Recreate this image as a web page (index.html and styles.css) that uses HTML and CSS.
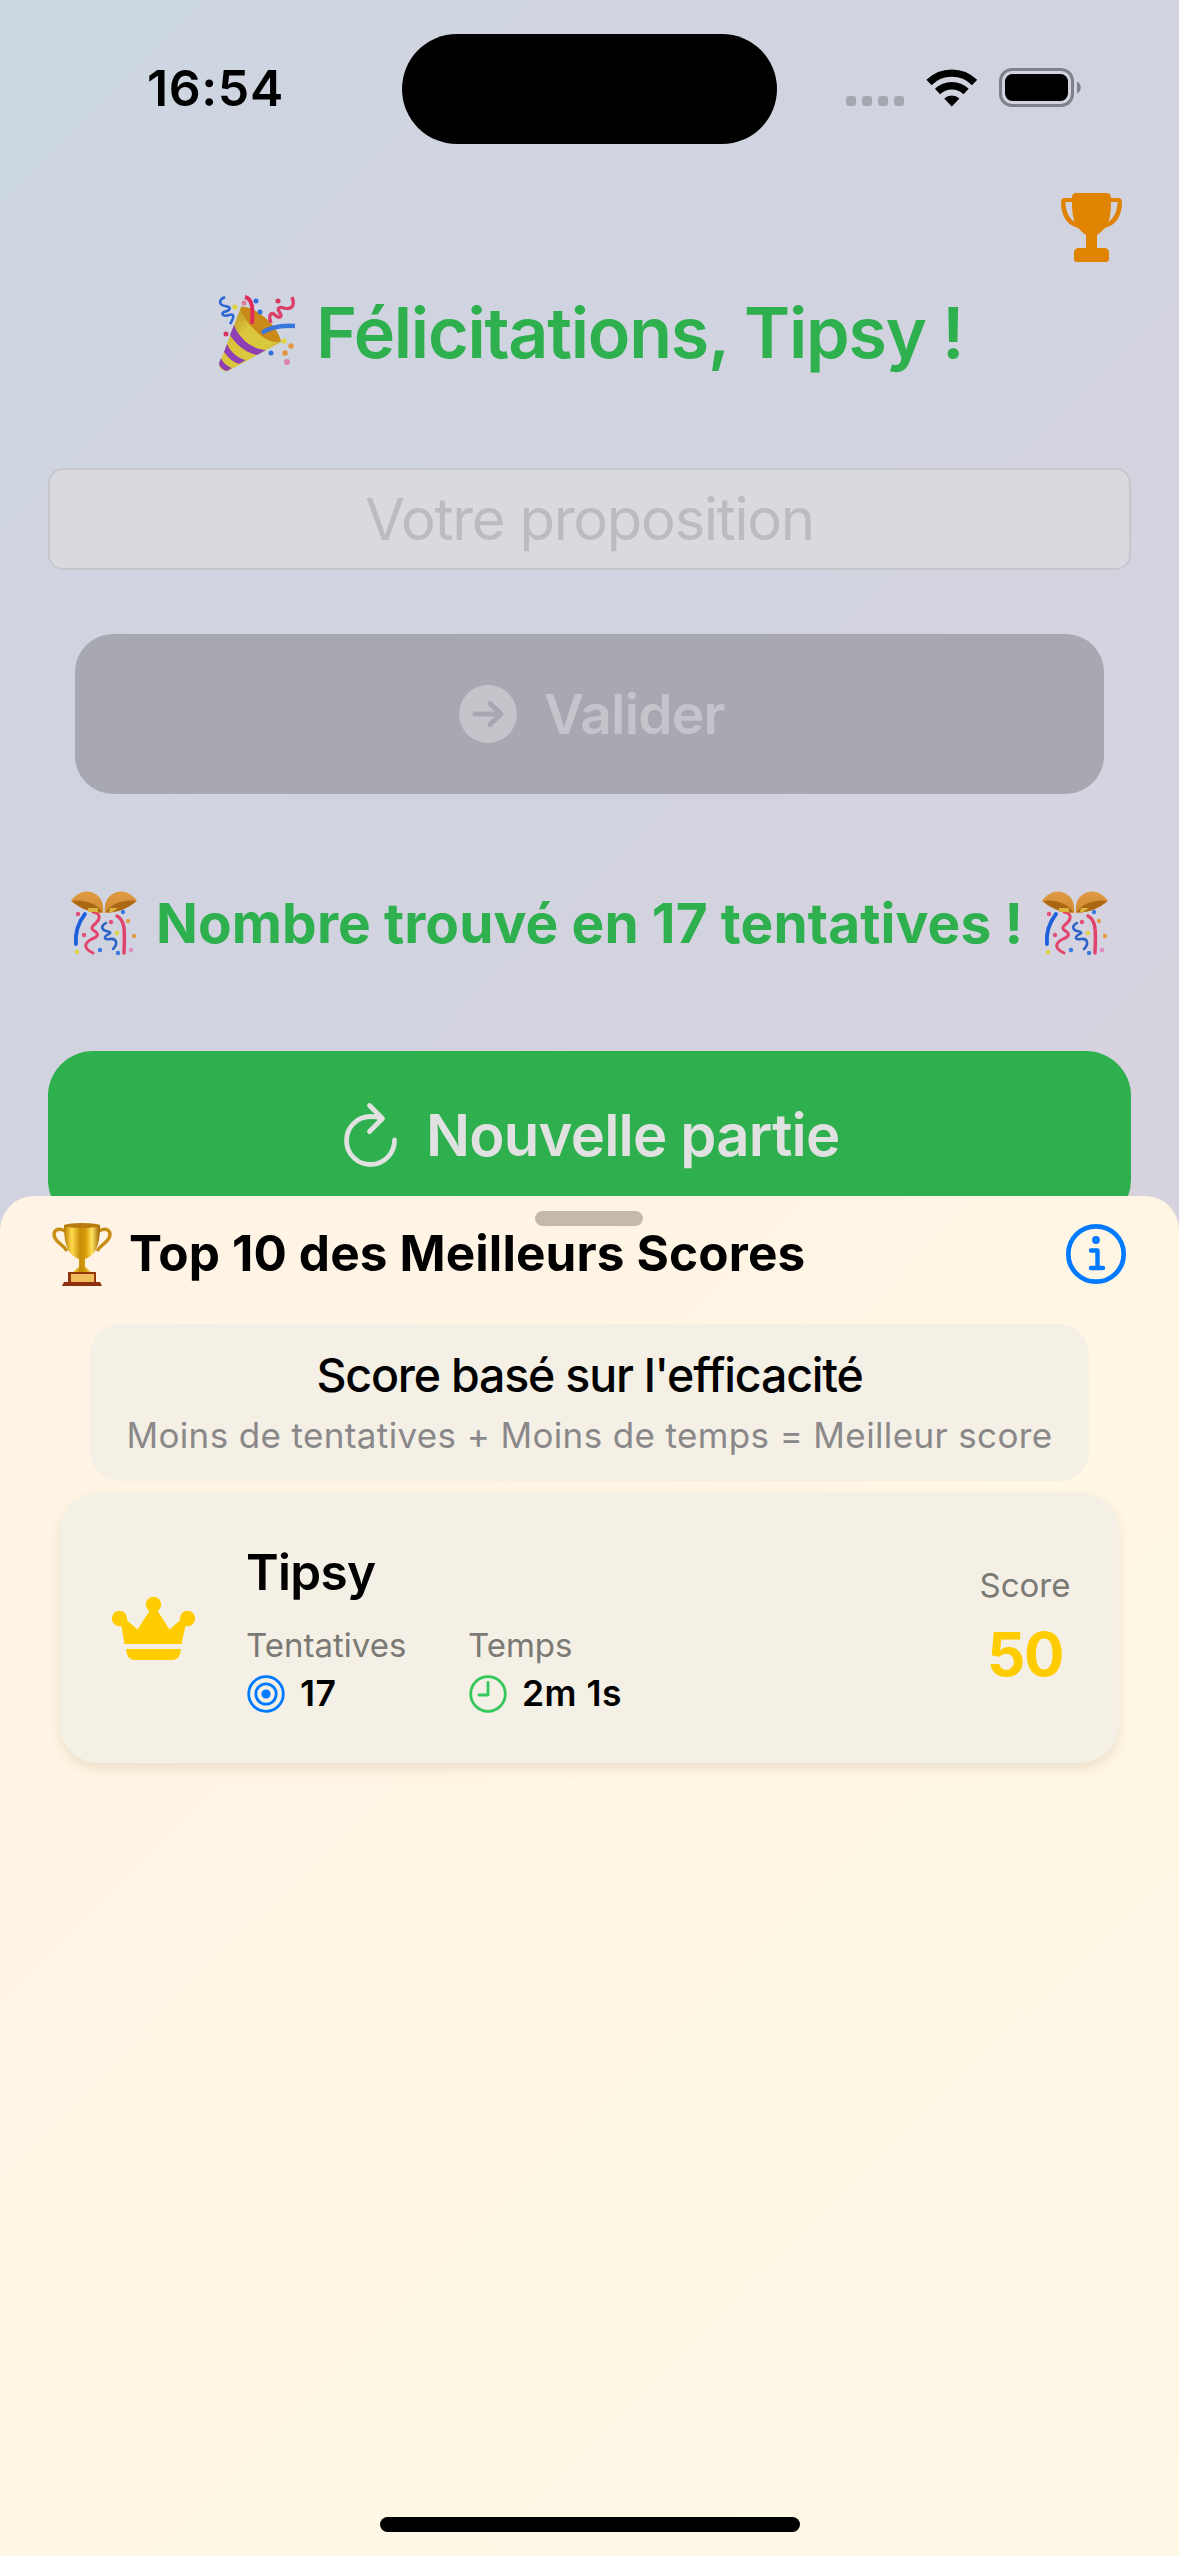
FILE: index.html
```
<!DOCTYPE html>
<html lang="fr">
<head>
<meta charset="utf-8">
<title>Top 10 des Meilleurs Scores</title>
<link rel="stylesheet" href="styles.css">
</head>
<body>
<svg class="defs" aria-hidden="true">
  <defs>
    <linearGradient id="cone" x1="0" y1="0" x2="1" y2="1"><stop offset="0" stop-color="#a9781b"/><stop offset=".4" stop-color="#dcc63c"/><stop offset=".7" stop-color="#d9c93d"/><stop offset="1" stop-color="#a86b14"/></linearGradient>
    <linearGradient id="bowl" x1="0" y1="0" x2="0" y2="1"><stop offset="0" stop-color="#df9a45"/><stop offset="1" stop-color="#d18a2c"/></linearGradient>
    <linearGradient id="gold" x1="0" y1="0" x2="1" y2="0"><stop offset="0" stop-color="#b87800"/><stop offset=".22" stop-color="#ffdc4c"/><stop offset=".45" stop-color="#c98d08"/><stop offset=".6" stop-color="#d99c0a"/><stop offset=".78" stop-color="#ffe25c"/><stop offset="1" stop-color="#9a5c00"/></linearGradient>
    <symbol id="ball" viewBox="0 0 66 65">
      <path d="M14 23C7 32 4 43 5 53" fill="none" stroke="#1e60dc" stroke-width="3.8" stroke-linecap="round"/>
      <path d="M22 21c7 1 8 6 3 11-6 5-5 6 0 9 3 3 1 5-4 7-8 4-9 9 1 14" fill="none" stroke="#e2446e" stroke-width="3" stroke-linecap="round"/>
      <path d="M35 32c-6 3-4 7 0 8 6 1 5 2 1 4-4 3-2 5 3 4 7-1 8 5 3 10" fill="none" stroke="#2c62c8" stroke-width="2.5" stroke-linecap="round"/>
      <path d="M46 25c8 4 8 14 7 37" fill="none" stroke="#e0446c" stroke-width="3.5" stroke-linecap="round"/>
      <path d="M0 10C5 2 14-1 20 1c10 3 13 11 12 21C20 22 8 17 0 10Z" fill="url(#bowl)"/>
      <path d="M1 10c10-2 25 2 30 11C20 22 8 17 1 10Z" fill="#ab6814"/>
      <path d="M66 10C61 2 52-1 46 1c-10 3-13 11-12 21 12 0 24-5 32-12Z" fill="url(#bowl)"/>
      <path d="M65 10c-10-2-25 2-30 11 11 1 23-4 30-11Z" fill="#ab6814"/>
      <path d="M17 17h10v4H17zM39 17h8l-6 4h-3z" fill="#dcb440"/>
      <g fill="#e2507b"><circle cx="7" cy="23" r="2.2"/><circle cx="13" cy="44" r="2.2"/><circle cx="40" cy="31" r="2.2"/></g>
      <g fill="#3a7be0"><circle cx="52" cy="21" r="2.2"/><circle cx="29" cy="59" r="2.2"/><circle cx="47" cy="62" r="2.2"/></g>
      <g fill="#e39a45"><circle cx="57" cy="30" r="2.2"/><circle cx="63" cy="45" r="2.2"/></g>
      <g fill="#dfd33e"><circle cx="6" cy="61" r="2.2"/><circle cx="46" cy="42" r="2.2"/></g>
      <circle cx="60" cy="59" r="2.3" fill="#dd8fc0"/>
    </symbol>
  </defs>
</svg>

<div class="screen">
  <main class="game">
    <header class="status">
      <span class="time">16:54</span>
      <span class="island"></span>
      <svg class="status-icons" width="236" height="40" viewBox="0 0 236 40">
        <g fill="#a5a7b1"><rect x="0" y="26" width="10" height="10" rx="3"/><rect x="16" y="26" width="10" height="10" rx="3"/><rect x="32" y="26" width="10" height="10" rx="3"/><rect x="48" y="26" width="10" height="10" rx="3"/></g>
        <g fill="none" stroke="#000" stroke-width="7.4"><path d="M83 12.500a32.500 32.500 0 0 1 45.600 0"/><path d="M91.500 21.500a20.500 20.500 0 0 1 28.600 0"/></g>
        <path d="M105.800 36.500l-7.600-8a11 11 0 0 1 15.200 0Z"/>
        <rect x="154.500" y="-.5" width="72" height="36" rx="11.500" fill="none" stroke="#7f818a" stroke-width="3"/>
        <rect x="159" y="4" width="63" height="27" rx="7.500"/>
        <path d="M231 11.500c5 2 5 10 0 12Z" fill="#7f818a"/>
      </svg>
    </header>
    <div class="toolbar">
      <svg width="61" height="69" viewBox="0 0 61 69"><path d="M15 0h30q5 0 5 5h7q4 0 4 4c0 14-6 23-17 26-3 3-5 5-8 7v13h7q5 0 5 5v6q0 3-3 3H16q-3 0-3-3v-6q0-5 5-5h7V42c-3-2-5-4-8-7C6 32 0 23 0 9q0-4 4-4h7q0-5 4-5ZM11 9H4.500c0 9 3.500 16 9 20-2-6-2.500-12-2.500-20Zm39 0c0 8-.5 14-2.500 20 5.500-4 9-11 9-20Z" fill="#df8300"/></svg>
    </div>
    <h1 class="congrats">
      <svg width="77" height="76" viewBox="0 0 77 76">
        <path d="M22 12C29 10 57 27 62 47L9 76Q1 77 0 70Z" fill="url(#cone)"/>
        <path d="M22 12c9-3 35 14 40 34-9 3-17-2-25-10-8-7-16-18-15-24Z" fill="#c98a18"/>
        <path d="M15 30C20 43 32 54 47 55l-9 5C26 58 16 48 11 40ZM8 49c4 9 12 15 19 16l-7 4C13 67 8 61 5 57ZM2 63c2 5 6 8 11 10l-5 3C3 75 0 71 0 68Z" fill="#8e3fb5"/>
        <path d="M26 2c8 2 8 12 7 27" fill="none" stroke="#e02e5c" stroke-width="4"/>
        <path d="M43 38c8-6 18-8 33-7" fill="none" stroke="#3a76dd" stroke-width="4.400"/>
        <path d="M6 2C-1 5 0 10 6 11c7 1 6 4-1 6-4 2 0 5 5 3 6-2 5 3 1 9" fill="none" stroke="#2c66d2" stroke-width="2.600"/>
        <path d="M52 28c-3-8 0-12 4-8s8 2 5-2-2-7 4-5 12-1 8-11" fill="none" stroke="#db4068" stroke-width="3.400"/>
        <g fill="#316fda"><circle cx="37" cy="6" r="2.500"/><circle cx="41" cy="17" r="2.500"/><circle cx="52" cy="58" r="2.500"/></g>
        <g fill="#e3943d"><circle cx="72" cy="51" r="2.700"/><circle cx="66" cy="58" r="2.700"/></g>
        <g fill="#dfd43e"><circle cx="16" cy="12" r="2.600"/><circle cx="65" cy="46" r="2.600"/></g>
        <g fill="#d93762"><circle cx="7" cy="39" r="2.500"/><circle cx="59" cy="6" r="2.500"/></g>
        <circle cx="68" cy="67" r="3" fill="#dd80ae"/><circle cx="25" cy="8" r="2.500" fill="#e07aa0"/>
      </svg>
      <span class="t-congrats">Félicitations, Tipsy !</span>
    </h1>
    <div class="guess"><span class="t-guess">Votre proposition</span></div>
    <div class="submit">
      <svg width="58" height="58" viewBox="0 0 58 58"><circle cx="29" cy="29" r="29" fill="#c4c4ca"/><path d="M16 29h25M31 18.500l11 10.500-11 10.500" fill="none" stroke="#a7a8b1" stroke-width="5" stroke-linecap="round" stroke-linejoin="round"/></svg>
      <span class="t-submit">Valider</span>
    </div>
    <p class="found">
      <svg width="66" height="65"><use href="#ball"/></svg>
      <span class="t-found">Nombre trouvé en 17 tentatives !</span>
      <svg width="66" height="65"><use href="#ball"/></svg>
    </p>
    <div class="again">
      <svg width="53" height="65" viewBox="0 0 53 65"><path d="M50.500 37A24 24 0 1 1 26.500 13.500Q32 13.500 37 15M25.500 2.500l13 13-13 13" fill="none" stroke="#e1e1e1" stroke-width="4.800" stroke-linecap="round" stroke-linejoin="round"/></svg>
      <span class="t-again">Nouvelle partie</span>
    </div>
  </main>

  <section class="sheet">
    <span class="grabber"></span>
    <header class="sheet-head">
      <svg width="60" height="63" viewBox="0 0 60 63">
        <path d="M13 8C5 4 0 8 3 15c3 6 8 6 12 13M47 8c8-4 13 0 10 7-3 6-8 6-12 13" fill="none" stroke="#c78e16" stroke-width="3.500"/>
        <path d="M12 2c0 20 4 30 15 34v8l-6 5h18l-6-5v-8c11-4 15-14 15-34Z" fill="url(#gold)"/>
        <ellipse cx="30" cy="2.500" rx="18" ry="2.500" fill="#b77b10"/>
        <path d="M16 49h28v11H16Z" fill="#94370b"/><path d="M19 51h23v8H19Z" fill="#f0bd5c"/><path d="M10 63l2-4h36l2 4Z" fill="#8e2f0b"/>
      </svg>
      <h2 class="t-title">Top 10 des Meilleurs Scores</h2>
      <svg class="info" width="60" height="60" viewBox="0 0 60 60"><circle cx="30" cy="30" r="27.700" fill="none" stroke="#007aff" stroke-width="4.700"/><circle cx="30" cy="16" r="3.900" fill="#007aff"/><path d="M25 26.500h6.500v17.500M25 44h12" fill="none" stroke="#007aff" stroke-width="4.400" stroke-linecap="round" stroke-linejoin="round"/></svg>
    </header>
    <div class="rule">
      <span class="t-rule">Score basé sur l'efficacité</span>
      <span class="t-sub">Moins de tentatives + Moins de temps = Meilleur score</span>
    </div>
    <article class="card">
      <svg class="crown" width="83" height="63" viewBox="0 0 83 63"><g fill="#fc0"><circle cx="7.500" cy="21.500" r="7.700"/><circle cx="41.500" cy="7.500" r="7.700"/><circle cx="75.500" cy="21.500" r="7.700"/><path d="M8.500 24l6-1 11 9.500L38 13h7l12.500 19.500 11-9.500 6 1-5 23H12.500ZM14 52h55q-1 11-8 11H22q-7 0-8-11Z"/></g></svg>
      <div class="player">
        <h3 class="t-name">Tipsy</h3>
        <dl class="stats">
          <div class="stat"><dt class="t-tries">Tentatives</dt><dd><svg width="38" height="38" viewBox="0 0 38 38"><g fill="none" stroke="#007aff" stroke-width="2.800"><circle cx="19" cy="19" r="17.300"/><circle cx="19" cy="19" r="10.200"/></g><circle cx="19" cy="19" r="4.600" fill="#007aff"/></svg><span class="t-v1">17</span></dd></div>
          <div class="stat"><dt class="t-timel">Temps</dt><dd><svg width="38" height="38" viewBox="0 0 38 38"><g fill="none" stroke="#34c759" stroke-width="2.800" stroke-linecap="round" stroke-linejoin="round"><circle cx="19" cy="19" r="17.300"/><path d="M19 7.500V20h-9"/></g></svg><span class="t-v2">2m 1s</span></dd></div>
        </dl>
      </div>
      <div class="score"><span class="t-score">Score</span><strong class="t-points">50</strong></div>
    </article>
    <span class="home"></span>
  </section>
</div>
</body>
</html>
```
FILE: styles.css
```
* { box-sizing: border-box; margin: 0; padding: 0; }
body { width: 1179px; height: 2556px; overflow: hidden; font-family: Inter, "Liberation Sans", sans-serif; color: #000; }
.defs { position: absolute; width: 0; height: 0; }
svg { display: block; flex: none; overflow: visible; }
span, h1, h2, h3, p, dt { white-space: nowrap; }
.screen { width: 1179px; height: 2556px; display: grid; grid-template-rows: 1196px 1360px; background: linear-gradient(135deg, #cad8e1 0%, #cfd5e1 10%, #d1d3e0 30%, #d6d3df 60%); }
.game { padding: 0 48px; overflow: hidden; display: flex; flex-direction: column; height: 1240px; }
.status { display: grid; grid-template-columns: 354px 375px 1fr; height: 180px; padding-top: 34px; align-items: start; }
.time { padding: 24px 0 0 99px; font-size: 50px; line-height: 60px; font-weight: 600; letter-spacing: .6px; }
.island { width: 375px; height: 110px; border-radius: 55px; background: #000; }
.status-icons { margin: 36px 0 0 69px; }
.toolbar { height: 115px; display: flex; justify-content: flex-end; padding: 13px 9px 0 0; }
.congrats { height: 173px; display: flex; gap: 20px; padding-left: 171px; color: #2eb04e; font-size: 70px; line-height: 76px; font-weight: 600; }
.t-congrats { letter-spacing: -1.25px; }
.guess { height: 102px; border: 2px solid #c6c6cd; border-radius: 15px; background: #d9d9df; display: flex; justify-content: center; align-items: center; font-size: 58px; color: #bbbbc1; }
.t-guess { letter-spacing: -1.25px; }
.submit { height: 160px; margin: 64px 27px 0; border-radius: 38px; background: #a7a8b1; display: flex; align-items: center; padding-left: 384px; gap: 27px; font-size: 55px; font-weight: 600; color: #c4c4ca; }
.t-submit { letter-spacing: -.75px; }
.found { margin-top: 97px; height: 160px; display: flex; padding-left: 23px; gap: 19px; color: #2eb04e; font-size: 55px; line-height: 65px; font-weight: 700; }
.t-found { letter-spacing: .09px; }
.again { height: 174px; border-radius: 45px; background: #2eb04e; padding: 52px 0 0 296px; display: flex; gap: 29px; color: #e1e1e1; font-size: 58px; line-height: 65px; font-weight: 600; }
.t-again { letter-spacing: -.8px; }
.sheet { position: relative; border-radius: 34px 34px 0 0; background: linear-gradient(135deg, #fff3e5, #fff6e4 50%, #fff8e6); display: flex; flex-direction: column; }
.grabber { position: absolute; left: 535px; top: 15px; width: 108px; height: 15px; border-radius: 8px; background: #c4baab; }
.sheet-head { display: flex; padding: 27px 53px 0 52px; height: 128px; gap: 17px; align-items: flex-start; }
.sheet-head h2 { font-size: 49.500px; line-height: 60px; font-weight: 700; letter-spacing: .13px; }
.info { margin-left: auto; margin-top: 1px; }
.rule { margin: 0 90px; height: 157px; border-radius: 30px; background: #f4f0e6; display: flex; flex-direction: column; align-items: center; padding-top: 22px; }
.t-rule { font-size: 46.500px; line-height: 58px; font-weight: 500; letter-spacing: -1.2px; }
.t-sub { font-size: 35px; line-height: 44px; margin-top: 9px; color: #8a8889; letter-spacing: .37px; }
.card { margin: 12px 60px 0; height: 270px; border-radius: 38px; background: #f4f0e6; box-shadow: 0 6px 12px rgba(100,70,20,.12); display: flex; padding: 0 49px 0 52px; }
.crown { margin-top: 104px; }
.player { padding: 49px 0 0 52px; flex: 1; }
.player h3 { font-size: 49.500px; line-height: 60px; font-weight: 600; letter-spacing: -.7px; margin-left: -1px; }
.stats { display: grid; grid-template-columns: 222px 1fr; margin-top: 23px; }
.stat dt { font-size: 33px; line-height: 40px; color: #7b7974; margin-left: -1px; }
.stat dd { display: flex; gap: 15px; align-items: center; font-size: 35.500px; line-height: 38px; font-weight: 600; margin-top: 10px; }
.t-v1, .t-v2 { letter-spacing: .5px; }
.score { display: flex; flex-direction: column; align-items: center; width: 90px; padding-top: 72px; }
.t-score { font-size: 33px; line-height: 40px; color: #7b7974; }
.t-points { font-size: 60px; line-height: 70px; font-weight: 700; color: #fc0; margin-top: 14px; letter-spacing: -1.5px; }
.home { width: 420px; height: 15px; border-radius: 8px; background: #000; margin: auto auto 24px; }
```
